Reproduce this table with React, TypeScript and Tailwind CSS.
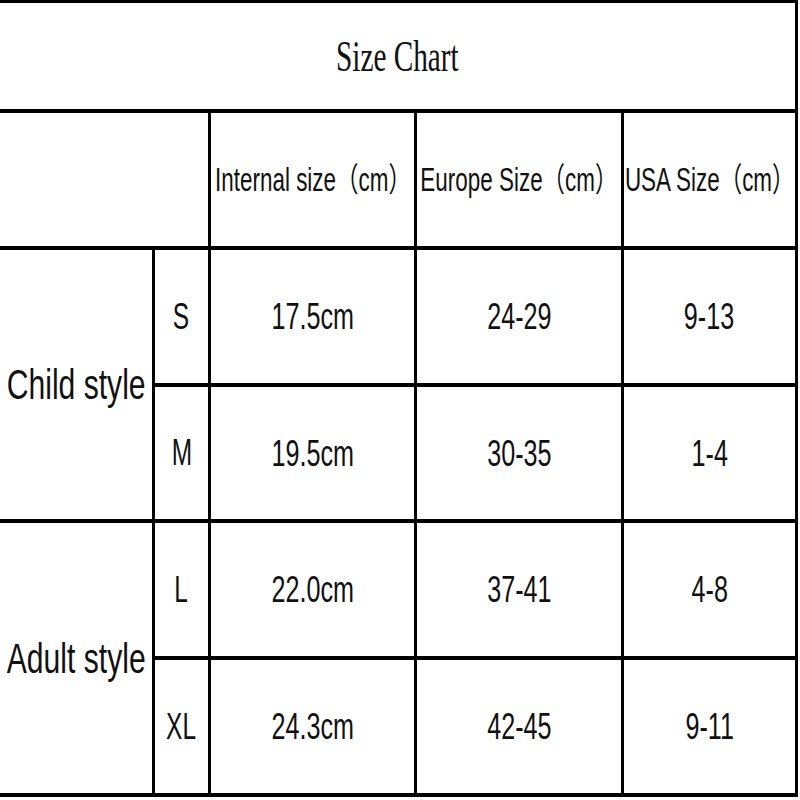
import React from "react";

const sans = "font-['Liberation_Sans','Noto_Sans_CJK_SC',sans-serif]";

type Row = { size: string; inner: string; eu: string; us: string };

const child: Row[] = [
  { size: "S", inner: "17.5cm", eu: "24-29", us: "9-13" },
  { size: "M", inner: "19.5cm", eu: "30-35", us: "1-4" },
];

const adult: Row[] = [
  { size: "L", inner: "22.0cm", eu: "37-41", us: "4-8" },
  { size: "XL", inner: "24.3cm", eu: "42-45", us: "9-11" },
];

const Cell = ({ children, className = "" }: { children: React.ReactNode; className?: string }) => (
  <div className={`bg-white flex items-center justify-center overflow-hidden ${className}`}>{children}</div>
);

const Txt = ({ children, className = "" }: { children: React.ReactNode; className?: string }) => (
  <span className={`inline-block whitespace-nowrap text-[#111] leading-none ${sans} ${className}`}>{children}</span>
);

const Group = ({ label, rows }: { label: string; rows: Row[] }) => (
  <>
    <Cell className="row-span-2">
      <Txt className="text-[43px] scale-x-[0.7]">{label}</Txt>
    </Cell>
    {rows.map((r) => (
      <React.Fragment key={r.size}>
        <Cell>
          <Txt className="text-[36px] scale-x-[0.68]">{r.size}</Txt>
        </Cell>
        <Cell>
          <Txt className="text-[37px] scale-x-[0.68]">{r.inner}</Txt>
        </Cell>
        <Cell>
          <Txt className="text-[37px] scale-x-[0.68]">{r.eu}</Txt>
        </Cell>
        <Cell>
          <Txt className="text-[37px] scale-x-[0.68]">{r.us}</Txt>
        </Cell>
      </React.Fragment>
    ))}
  </>
);

export default function App() {
  return (
    <div className="w-[800px] h-[800px] bg-white">
      <div className="w-[798px] h-[797px] bg-black pt-[3px] pr-[3px] pb-[4px] grid grid-cols-[152px_53px_203px_204px_171px] grid-rows-[106px_133px_133px_132px_133px_133px] gap-x-[3px] gap-y-[4px]">
        <Cell className="col-span-5">
          <span className="inline-block whitespace-nowrap leading-none text-[45px] text-[#111] scale-x-[0.65] font-['Liberation_Serif',serif]">
            Size Chart
          </span>
        </Cell>
        <Cell className="col-span-2" />
        <Cell>
          <Txt className="text-[33px] scale-x-[0.68]">Internal size（cm）</Txt>
        </Cell>
        <Cell>
          <Txt className="text-[33px] scale-x-[0.68]">Europe Size（cm）</Txt>
        </Cell>
        <Cell>
          <Txt className="text-[33px] scale-x-[0.68]">USA Size（cm）</Txt>
        </Cell>
        <Group label="Child style" rows={child} />
        <Group label="Adult style" rows={adult} />
      </div>
    </div>
  );
}
